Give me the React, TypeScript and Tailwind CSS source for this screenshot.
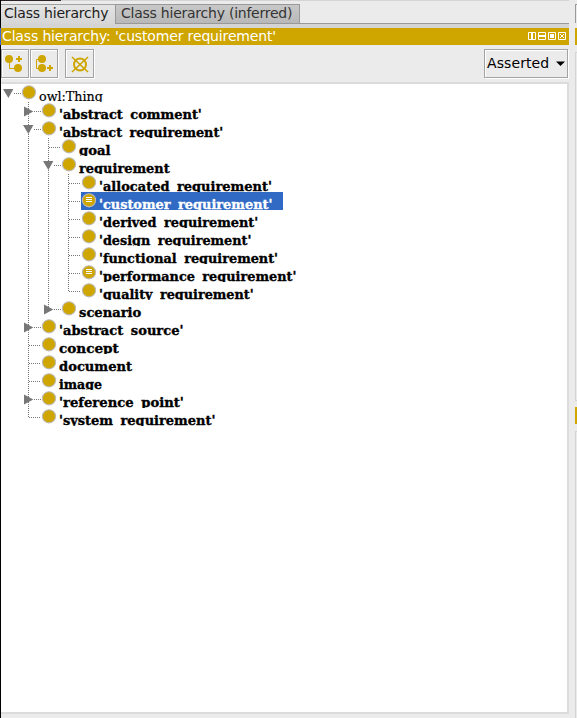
import React from "react";

type Item = {
  label: string;
  level: number;
  width: number;
  state?: "open" | "closed";
  defined?: boolean;
  selected?: boolean;
};

const items: Item[] = [
  { label: "owl:Thing", level: 0, width: 63.5, state: "open" },
  { label: "'abstract comment'", level: 1, width: 142.5, state: "closed" },
  { label: "'abstract requirement'", level: 1, width: 164.5, state: "open" },
  { label: "goal", level: 2, width: 31.5 },
  { label: "requirement", level: 2, width: 90.5, state: "open" },
  { label: "'allocated requirement'", level: 3, width: 172.5 },
  { label: "'customer requirement'", level: 3, width: 173.5, defined: true, selected: true },
  { label: "'derived requirement'", level: 3, width: 159.5 },
  { label: "'design requirement'", level: 3, width: 152.5 },
  { label: "'functional requirement'", level: 3, width: 179.5 },
  { label: "'performance requirement'", level: 3, width: 197.5, defined: true },
  { label: "'quality requirement'", level: 3, width: 154.5 },
  { label: "scenario", level: 2, width: 62.5, state: "closed" },
  { label: "'abstract source'", level: 1, width: 124.5, state: "closed" },
  { label: "concept", level: 1, width: 59.5 },
  { label: "document", level: 1, width: 73.5 },
  { label: "image", level: 1, width: 42.5 },
  { label: "'reference point'", level: 1, width: 124.5, state: "closed" },
  { label: "'system requirement'", level: 1, width: 156.5 },
];

function Label({ item }: { item: Item }) {
  const ref = React.useRef<HTMLSpanElement>(null);
  const [scale, setScale] = React.useState(1);
  React.useLayoutEffect(() => {
    if (ref.current) setScale(item.width / ref.current.offsetWidth);
  }, [item.width]);
  return (
    <span
      ref={ref}
      className={`mt-[4px] inline-block origin-left whitespace-pre font-['DejaVu_Serif',serif] text-[13px] leading-[18px] [word-spacing:3px] ${
        item.level === 0 ? "[-webkit-text-stroke:0.2px]" : "font-bold [-webkit-text-stroke:0.35px]"
      } ${item.selected ? "text-white" : "text-black"}`}
      style={{ transform: `scaleX(${scale})` }}
    >
      {item.label}
    </span>
  );
}

function Dot({ defined }: { defined?: boolean }) {
  return (
    <svg width="16" height="18" className="block shrink-0">
      <circle cx="8" cy="8.3" r="6.6" fill="#cfa500" stroke="#bdbab4" strokeWidth="1.1" />
      {defined && <path d="M5 5.5h6M5 7.5h6M5 9.5h6" stroke="#fff" strokeWidth="1" />}
    </svg>
  );
}

function Row({ item }: { item: Item }) {
  const spacer = ["w-[20px]", "w-[40px]", "w-[60px]", "w-[80px]"][item.level];
  return (
    <div className="flex h-[18px] overflow-hidden">
      <div className={`${spacer} flex shrink-0 justify-end`}>
        <svg width="20" height="18" className="block">
          <path d={item.state ? "M13 9.5H20" : "M8 9.5H20"} stroke="#777" strokeDasharray="1 1" />
          {item.state === "open" && <path d="M2 5H12.4L7.4 14Z" fill="#777" />}
          {item.state === "closed" && <path d="M3 4.5V14.5L12.3 9.5Z" fill="#777" />}
        </svg>
      </div>
      <div className={`flex h-[18px] shrink-0 ${item.selected ? "w-[202px] bg-[#316ac5]" : ""}`}>
        <Dot defined={item.defined} />
        <span className="w-[2px] shrink-0" />
        <Label item={item} />
      </div>
    </div>
  );
}

function ToolButton({ children, wide }: { children: React.ReactNode; wide?: boolean }) {
  return (
    <button
      className={`flex h-[29px] items-center justify-center border border-[#a3a3a3] bg-[#ebebeb] shadow-[1px_1px_0_#fff,inset_1px_1px_0_#fff] ${
        wide ? "w-[29px]" : "w-[28px]"
      }`}
    >
      {children}
    </button>
  );
}

export default function App() {
  return (
    <div className="relative flex h-[718px] w-[577px] overflow-hidden bg-[#ebebeb] font-['DejaVu_Sans',sans-serif] text-[14px]">
      <div className="flex w-px shrink-0 flex-col bg-black">
        <div className="mt-[28px] h-[17px] bg-[#4169e1]" />
      </div>
      <main className="flex w-[568px] shrink-0 flex-col">
        <div className="h-px bg-[#d4d4d4]">
          <div className="h-px w-[60px] bg-[#2b2328]" />
        </div>
        <div className="flex h-[23px] items-end border-b border-[#999]">
          <div className="-mb-px h-[20px] w-[114px] border-t border-[#a0a0a0] bg-linear-to-b from-[#e4e4e4] to-[#d6d6d6] pl-[3px] leading-[17px] tracking-[-0.2px] whitespace-nowrap text-[#1c1c1c]">
            Class hierarchy
          </div>
          <div className="h-[19px] w-[185px] border border-b-0 border-[#999] bg-linear-to-b from-[#c8c8c8] to-[#b8b8b8] pl-[5px] leading-[17px] tracking-[-0.24px] whitespace-nowrap text-[#333]">
            Class hierarchy (inferred)
          </div>
        </div>
        <div className="h-[4px] bg-[#d4d4d4]" />
        <div className="flex h-[17px] items-center justify-between bg-[#cfa500] pl-px leading-[17px] text-white">
          <span className="tracking-[-0.15px] whitespace-nowrap">Class hierarchy: 'customer requirement'</span>
          <svg width="42" height="17" fill="none" stroke="#fff" className="block">
            <path d="M1.5 4.5h7v7h-7zM11.5 4.5h7v7h-7z" />
            <path d="M5 4v8M11 8h8" strokeWidth="2" />
            <path d="M21.5 4.5h7v7h-7z" />
            <path d="M23 6h4v4h-4z" fill="#fff" stroke="none" />
            <path d="M31.5 4.5h7v7h-7zM33 6l4 4M37 6l-4 4" />
          </svg>
        </div>
        <div className="flex h-[37px] items-start pt-[4px]">
          <ToolButton>
            <svg width="26" height="27" fill="#cfa500" stroke="#cfa500" className="shrink-0">
              <circle cx="7" cy="9" r="4" stroke="none" />
              <circle cx="16" cy="18" r="4" stroke="none" />
              <path d="M7.5 12v6.5H13" fill="none" />
              <path d="M17 6v6M14 9h6" strokeWidth="2" />
            </svg>
          </ToolButton>
          <span className="w-px" />
          <ToolButton>
            <svg width="26" height="27" fill="#cfa500" stroke="#cfa500" className="shrink-0">
              <circle cx="11" cy="9" r="4" stroke="none" />
              <circle cx="11" cy="18" r="4" stroke="none" />
              <path d="M8 9.5H5.5V18.5H8" fill="none" />
              <path d="M19 15v6M16 18h6" strokeWidth="2" />
            </svg>
          </ToolButton>
          <span className="w-[7px]" />
          <ToolButton wide>
            <svg width="27" height="27" fill="none" stroke="#cfa500" className="shrink-0">
              <circle cx="14" cy="14.5" r="6" strokeWidth="2" />
              <path d="M6 7l16 15M22 7L6 22" strokeWidth="1.6" />
            </svg>
          </ToolButton>
          <div className="mr-px ml-auto flex h-[29px] w-[84px] items-center border border-[#a3a3a3] pl-[2px] text-black shadow-[1px_1px_0_#fff,inset_1px_1px_0_#fff]">
            <span className="tracking-[0.1px]">Asserted</span>
            <svg width="10" height="6" className="ml-[7px]">
              <path d="M0 0.5H9L4.5 5Z" />
            </svg>
          </div>
        </div>
        <section className="relative h-[632px] border-2 border-l-0 border-[#dcdcdc] bg-white">
          <svg className="absolute top-0 left-0" width="80" height="350" stroke="#777" strokeDasharray="1 1">
            <path d="M27.5 18V334M47.5 54V225M67.5 90V208" />
          </svg>
          <div className="relative">
            {items.map((item) => (
              <Row key={item.label} item={item} />
            ))}
          </div>
        </section>
      </main>
      <aside className="ml-[6px] flex w-[2px] shrink-0 flex-col">
        <div className="mt-[4px] h-[19px] border-t border-l border-[#999]" />
        <div className="mt-[5px] h-[17px] bg-[#cfa500]" />
        <div className="mt-[7px] h-[349px] border border-r-0 border-[#d4d4d4]" />
        <div className="mt-[6px] h-[17px] bg-[#cfa500]" />
        <div className="mt-[7px] h-[287px] border-t border-l border-[#d4d4d4]" />
      </aside>
    </div>
  );
}
